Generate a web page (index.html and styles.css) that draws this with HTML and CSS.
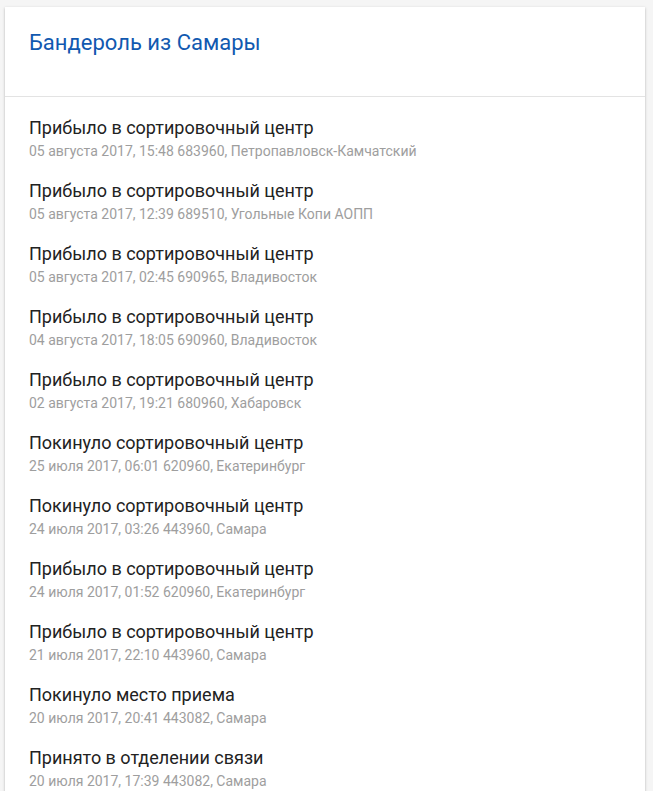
FILE: index.html
```html
<!DOCTYPE html>
<html lang="ru">
<head>
<meta charset="utf-8">
<link rel="stylesheet" href="styles.css">
</head>
<body>
<div class="card">
  <div class="card-header">
    <h1 class="card-title">Бандероль из Самары</h1>
  </div>
  <ul class="events">
    <li class="event"><div class="event-title">Прибыло в сортировочный центр</div><div class="event-meta">05 августа 2017, 15:48 683960, Петропавловск-Камчатский</div></li>
    <li class="event"><div class="event-title">Прибыло в сортировочный центр</div><div class="event-meta">05 августа 2017, 12:39 689510, Угольные Копи АОПП</div></li>
    <li class="event"><div class="event-title">Прибыло в сортировочный центр</div><div class="event-meta">05 августа 2017, 02:45 690965, Владивосток</div></li>
    <li class="event"><div class="event-title">Прибыло в сортировочный центр</div><div class="event-meta">04 августа 2017, 18:05 690960, Владивосток</div></li>
    <li class="event"><div class="event-title">Прибыло в сортировочный центр</div><div class="event-meta">02 августа 2017, 19:21 680960, Хабаровск</div></li>
    <li class="event"><div class="event-title">Покинуло сортировочный центр</div><div class="event-meta">25 июля 2017, 06:01 620960, Екатеринбург</div></li>
    <li class="event"><div class="event-title">Покинуло сортировочный центр</div><div class="event-meta">24 июля 2017, 03:26 443960, Самара</div></li>
    <li class="event"><div class="event-title">Прибыло в сортировочный центр</div><div class="event-meta">24 июля 2017, 01:52 620960, Екатеринбург</div></li>
    <li class="event"><div class="event-title">Прибыло в сортировочный центр</div><div class="event-meta">21 июля 2017, 22:10 443960, Самара</div></li>
    <li class="event"><div class="event-title">Покинуло место приема</div><div class="event-meta">20 июля 2017, 20:41 443082, Самара</div></li>
    <li class="event"><div class="event-title">Принято в отделении связи</div><div class="event-meta">20 июля 2017, 17:39 443082, Самара</div></li>
  </ul>
</div>
</body>
</html>
```
FILE: styles.css
```css
html, body {
  margin: 0;
  padding: 0;
}
body {
  background: #f5f5f5;
  font-family: Roboto, "Noto Sans", sans-serif;
  padding: 7px 8px 0 5px;
  overflow: hidden;
  height: 791px;
  box-sizing: border-box;
}
.card {
  background: #fff;
  box-shadow: 0 1px 3px rgba(0,0,0,0.18), 0 1px 2px rgba(0,0,0,0.10);
  min-height: 900px;
}
.card-header {
  height: 90px;
  box-sizing: border-box;
  padding: 22px 24px 0;
  border-bottom: 1px solid #e3e3e3;
}
.card-title {
  margin: 0;
  font-size: 22px;
  line-height: 28px;
  font-weight: 400;
  color: #1159b0;
}
.events {
  list-style: none;
  margin: 0;
  padding: 8px 0 0;
}
.event {
  padding: 10px 24px 7px;
}
.event-title {
  font-size: 18px;
  line-height: 26px;
  color: #222222;
}
.event-meta {
  font-size: 14px;
  line-height: 20px;
  color: #9e9e9e;
}
```
